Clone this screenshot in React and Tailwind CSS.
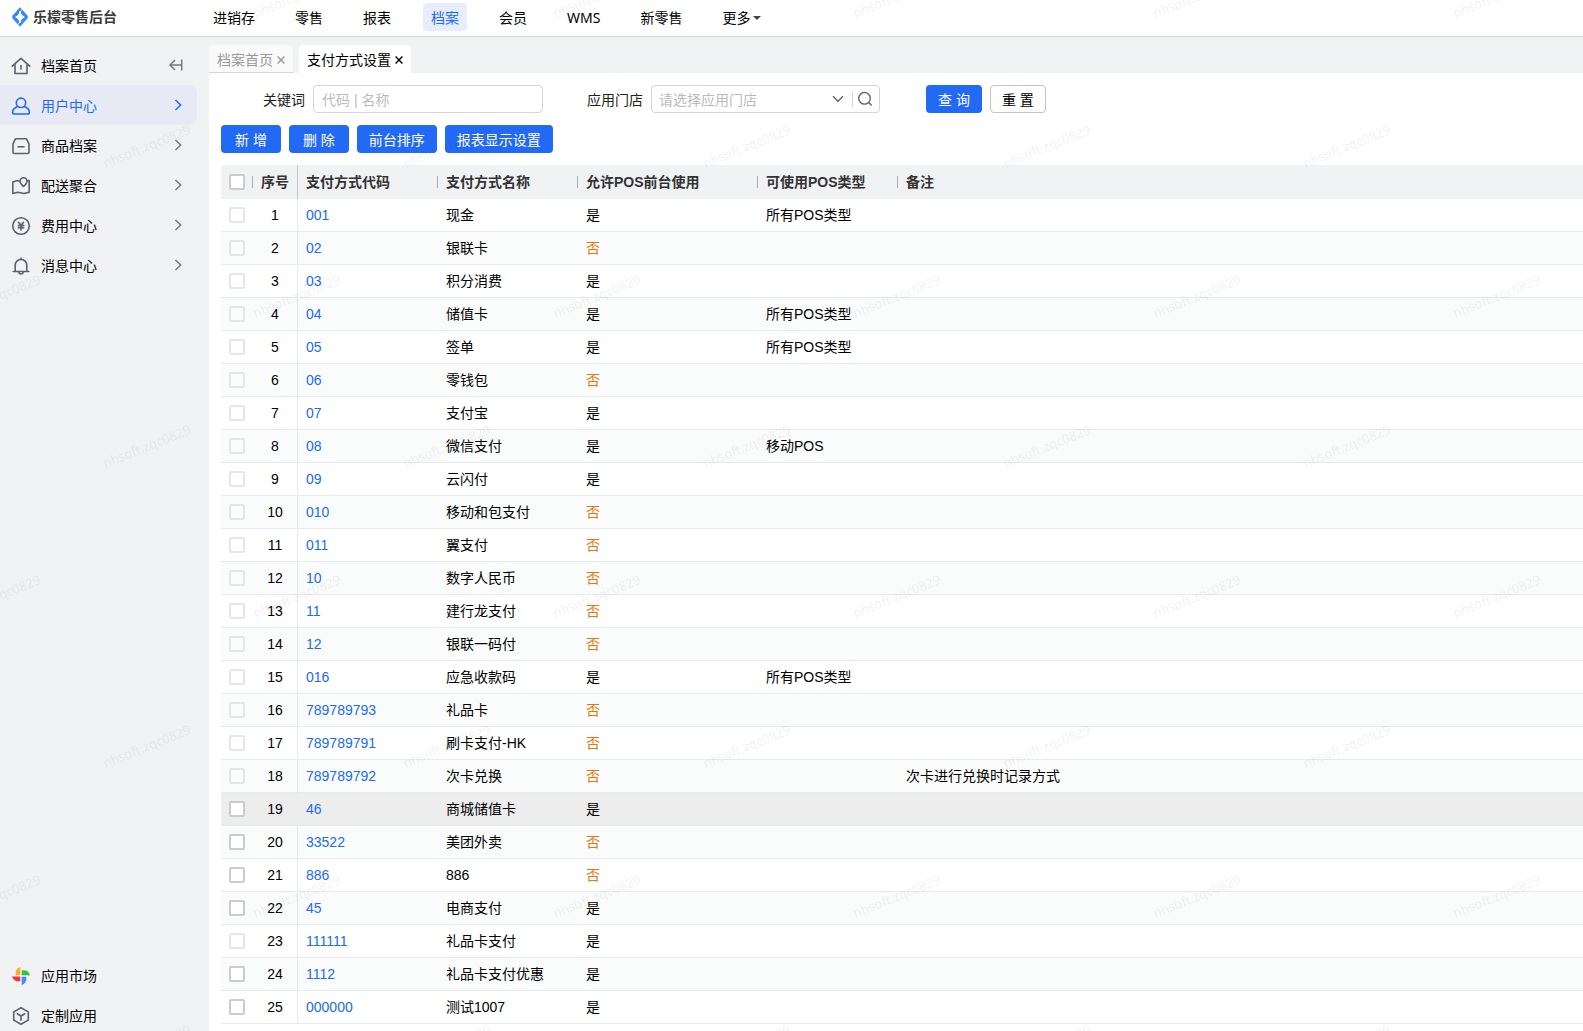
import { useState } from 'react';

const NAV = ['进销存', '零售', '报表', '档案', '会员', 'WMS', '新零售'];

const ROWS = [
  ['001', '现金', true, '所有POS类型'],
  ['02', '银联卡', false],
  ['03', '积分消费', true],
  ['04', '储值卡', true, '所有POS类型'],
  ['05', '签单', true, '所有POS类型'],
  ['06', '零钱包', false],
  ['07', '支付宝', true],
  ['08', '微信支付', true, '移动POS'],
  ['09', '云闪付', true],
  ['010', '移动和包支付', false],
  ['011', '翼支付', false],
  ['10', '数字人民币', false],
  ['11', '建行龙支付', false],
  ['12', '银联一码付', false],
  ['016', '应急收款码', true, '所有POS类型'],
  ['789789793', '礼品卡', false],
  ['789789791', '刷卡支付-HK', false],
  ['789789792', '次卡兑换', false, '', '次卡进行兑换时记录方式'],
  ['46', '商城储值卡', true],
  ['33522', '美团外卖', false],
  ['886', '886', false],
  ['45', '电商支付', true],
  ['111111', '礼品卡支付', true],
  ['1112', '礼品卡支付优惠', true],
  ['000000', '测试1007', true],
];

// only custom payment types can be selected
const EDITABLE = ['46', '33522', '886', '45', '1112', '000000'];

const Icon = ({ children }) => (
  <svg viewBox="0 0 20 20" className="w-5 h-5 shrink-0" fill="none" stroke="currentColor" strokeWidth="1.6" strokeLinejoin="round" strokeLinecap="round" aria-hidden="true">
    {children}
  </svg>
);

const HomeIcon = () => (
  <Icon>
    <path d="M1.200 10.200 10 2.400l8.800 7.800M4 8.500v9h12v-9M10 9.500v3.500" />
  </Icon>
);

const UserIcon = () => (
  <Icon>
    <circle cx="10" cy="6.800" r="4.700" />
    <path d="M6.200 10.800C3.200 12 1.600 14 1.600 16.200c0 1.200.7 1.800 1.900 1.800h13c1.200 0 1.900-.6 1.900-1.800 0-2.200-1.600-4.200-4.600-5.400" />
  </Icon>
);

const BoxIcon = () => (
  <Icon>
    <path d="M4.500 2.800h11l2.500 5v8.400c0 .8-.4 1.300-1.300 1.300H3.300c-.9 0-1.300-.5-1.300-1.300V7.800zM7 10.800h6" />
  </Icon>
);

const MapIcon = () => (
  <Icon>
    <path d="M7.800 5 6.500 4.500 1.800 6v11.500l5-1.200 6.200 1.200 5.200-1.200V4.500h-2M12.500 10.500c-2.300-2.200-3.500-3.800-3.500-5.300a3.500 3.500 0 0 1 7 0c0 1.500-1.200 3.100-3.500 5.300z" />
  </Icon>
);

const FeeIcon = () => (
  <Icon>
    <circle cx="10" cy="10" r="8.300" />
    <path d="M7.500 6.300 10 9.300 12.500 6.300M10 9.300V14M7.300 9.600h5.400M7.300 11.800h5.400" />
  </Icon>
);

const BellIcon = () => (
  <Icon>
    <path d="M10 2V3.300M4.200 15.500V9.200a5.800 5.800 0 0 1 11.600 0v6.300M2.200 15.500h15.600M7.800 16c.2 1.300 1 2 2.200 2s2-.7 2.200-2" />
  </Icon>
);

const CubeIcon = () => (
  <Icon>
    <path d="M10 1.800 17.300 5.900v8.200L10 18.200 2.700 14.100V5.900zM6.200 7.800 10 10l3.800-2.200M10 10v4.300" />
  </Icon>
);

const MarketIcon = () => (
  <svg viewBox="0 0 20 20" className="w-5 h-5 shrink-0" aria-hidden="true">
    <path d="M9.300 1v8H5C3.800 6 5.500 2 9.300 1z" fill="#fbb117" />
    <path d="M10.700 4.800c3-1.300 7.300.4 8.300 4.500h-8.300z" fill="#2bc840" />
    <path d="M1 10.500h8.300v4.500C6 16.300 2 14.400 1 10.500z" fill="#f5333f" />
    <path d="M10.700 10.700H15c1.200 3.300-.5 7.300-4.300 8.300z" fill="#3a8dff" />
  </svg>
);

const Chevron = () => (
  <svg viewBox="0 0 12 12" className="w-3 h-3 shrink-0" fill="none" stroke="currentColor" strokeWidth="1.500" aria-hidden="true">
    <path d="M3.500 1 8.700 6 3.500 11" />
  </svg>
);

const Close = () => (
  <svg viewBox="0 0 8 8" className="w-2 h-2" stroke="currentColor" strokeWidth="1.400" aria-hidden="true">
    <path d="M.6.6l6.800 6.800M7.400.6.6 7.400" />
  </svg>
);

const MENU = [
  { label: '用户中心', icon: UserIcon, active: true },
  { label: '商品档案', icon: BoxIcon },
  { label: '配送聚合', icon: MapIcon },
  { label: '费用中心', icon: FeeIcon },
  { label: '消息中心', icon: BellIcon },
];

const Watermark = () => (
  <svg className="absolute inset-0 w-full h-full pointer-events-none z-10" aria-hidden="true">
    <defs>
      <pattern id="wm" width="300" height="300" patternUnits="userSpaceOnUse">
        {[[147, 147], [-3, -3], [297, -3], [-3, 297], [297, 297]].map(([x, y]) => (
          <text key={`${x},${y}`} x={x} y={y + 4} transform={`rotate(-22 ${x} ${y})`} textAnchor="middle" fontSize="13" fill="#000" fillOpacity="0.05" fontFamily="'Noto Sans', sans-serif">
            nhsoft.zqc0829
          </text>
        ))}
      </pattern>
    </defs>
    <rect width="100%" height="100%" fill="url(#wm)" />
  </svg>
);

const Sidebar = () => (
  <aside className="w-[209px] shrink-0 flex flex-col justify-between pt-2">
    <nav aria-label="档案">
      <div className="flex items-center h-10 pl-[11px] pr-[26px]">
        <a href="#home" className="flex items-center gap-[10px] flex-1 pt-0.5">
          <span className="text-[#5c5f6e]"><HomeIcon /></span>
          档案首页
        </a>
        <button type="button" aria-label="收起菜单" className="text-[#777]">
          <svg viewBox="0 0 14 12" className="w-[14px] h-3" fill="none" stroke="currentColor" strokeWidth="1.500" aria-hidden="true">
            <path d="M6 1 1 6l5 5M1 6h11.500M12.700.5v11" />
          </svg>
        </button>
      </div>
      {MENU.map(({ label, icon: ItemIcon, active }) => (
        <a
          key={label}
          href="#menu"
          className={`flex items-center h-10 pl-[11px] pr-[13px] mr-3 rounded-r-lg ${active ? 'bg-[#e7eaf4] text-[#226af5]' : ''}`}
        >
          <span className="flex items-center gap-[10px] flex-1 pt-0.5">
            <span className={active ? '' : 'text-[#5c5f6e]'}><ItemIcon /></span>
            {label}
          </span>
          <span className={active ? '' : 'text-[#777]'}><Chevron /></span>
        </a>
      ))}
    </nav>
    <div className="flex flex-col gap-2">
      <a href="#market" className="flex items-center gap-[10px] h-8 pl-[11px] pt-0.5">
        <MarketIcon />
        应用市场
      </a>
      <a href="#custom" className="flex items-center gap-[10px] h-8 pl-[11px] pt-0.5">
        <span className="text-[#5c5f6e]"><CubeIcon /></span>
        定制应用
      </a>
    </div>
  </aside>
);

const HeadCell = ({ children, className }) => (
  <th className={`p-0 font-bold text-left ${className}`}>
    <div className="flex items-center justify-between pl-2">
      {children}
      <span className="w-px h-3 bg-[#a9adbd]"></span>
    </div>
  </th>
);

const PaymentTable = () => (
  <table className="w-full table-fixed border-separate border-spacing-0">
    <thead className="bg-[#f1f2f4] text-[#333]">
      <tr className="h-[34px]">
        <HeadCell className="w-8">
          <input type="checkbox" aria-label="全选" className="block appearance-none w-4 h-4 border-2 border-[#ccc] rounded-xs bg-white" />
        </HeadCell>
        <th className="w-[45px] p-0 font-bold border-r border-[#c3c6cc]">序号</th>
        <HeadCell className="w-[140px]">支付方式代码</HeadCell>
        <HeadCell className="w-[140px]">支付方式名称</HeadCell>
        <HeadCell className="w-[180px]">允许POS前台使用</HeadCell>
        <HeadCell className="w-[140px]">可使用POS类型</HeadCell>
        <th className="p-0 pl-2 font-bold text-left">备注</th>
      </tr>
    </thead>
    <tbody>
      {ROWS.map(([code, name, allowed, types, remark], i) => {
        const editable = EDITABLE.includes(code);
        return (
          <tr key={code} className={`h-[33px] *:border-b *:border-[#e8eaec] ${i === 18 ? 'bg-[#ededed]' : 'even:bg-[#fafcfb]'}`}>
            <td className="p-0 pl-2">
              <input
                type="checkbox"
                aria-label={name}
                disabled={!editable}
                className="block appearance-none w-4 h-4 border-2 border-[#ccc] rounded-xs bg-white disabled:border-[#e6e6e6] disabled:bg-transparent"
              />
            </td>
            <td className="p-0 text-center border-r">{i + 1}</td>
            <td className="p-0 pl-2"><a href="#detail" className="text-[#226af5]">{code}</a></td>
            <td className="p-0 pl-2">{name}</td>
            <td className={`p-0 pl-2 ${allowed ? '' : 'text-[#e8750c]'}`}>{allowed ? '是' : '否'}</td>
            <td className="p-0 pl-2">{types}</td>
            <td className="p-0 pl-2">{remark}</td>
          </tr>
        );
      })}
    </tbody>
  </table>
);

const App = () => {
  const [keyword, setKeyword] = useState('');

  return (
    <div className="relative min-h-screen flex flex-col bg-[#f1f2f4] text-black text-[14px] leading-5 overflow-hidden font-['Liberation_Sans','Noto_Sans_CJK_SC',sans-serif]">
      {/* Top bar */}
      <header className="flex items-center h-[37px] pb-0.5 bg-white border-b border-[#d5d6d8]">
        <a href="#top" className="flex items-center gap-[5px] w-[205px] pl-3 font-bold text-[#3b3b3b] shrink-0">
          <svg viewBox="0 0 16 20" className="w-4 h-5" aria-hidden="true">
            <path d="M8 .3l7.200 7.900c.9 1.200.9 2.400 0 3.600L8 19.700.8 11.800c-.9-1.200-.9-2.400 0-3.600z" fill="#348af9" />
            <path d="M8 4.300c.6 2.900 2 4.800 4.300 5.700C10 10.900 8.600 12.800 8 15.700 7.400 12.800 6 10.900 3.700 10 6 9.100 7.400 7.200 8 4.300z" fill="#fff" stroke="#fff" strokeWidth="1" />
            <path d="M8.300 5 10 2.200M7.700 15 6 17.800" stroke="#fff" strokeWidth=".8" />
          </svg>
          乐檬零售后台
        </a>
        <nav className="flex items-center gap-6 font-['Noto_Sans','Noto_Sans_CJK_SC',sans-serif]" aria-label="主导航">
          {NAV.map(item => (
            <a key={item} href="#nav" className={`flex items-center h-7 px-2 pt-0.5 rounded ${item === '档案' ? 'bg-[#e7edfc] text-[#226af5]' : ''}`}>
              {item}
            </a>
          ))}
          <button type="button" className="flex items-center gap-[3px] h-7 px-2 pt-0.5">
            更多
            <svg viewBox="0 0 8 4" className="w-2 h-1" fill="#444" aria-hidden="true"><path d="M0 0h8L4 4z" /></svg>
          </button>
        </nav>
      </header>

      <div className="flex flex-1">
        <Sidebar />

        <div className="flex-1 min-w-0 flex flex-col pt-2">
          {/* Tabs */}
          <div className="flex gap-[6px] h-7">
            <div className="flex items-center gap-1 px-2 pt-0.5 rounded-t bg-[#fafafa] border-b border-[#d5d6d8] text-[#999]">
              <a href="#home">档案首页</a>
              <button type="button" aria-label="关闭档案首页"><Close /></button>
            </div>
            <div className="flex items-center gap-1 px-2 pt-0.5 rounded-t bg-white">
              <a href="#payment">支付方式设置</a>
              <button type="button" aria-label="关闭支付方式设置"><Close /></button>
            </div>
          </div>

          <main className="flex-1 bg-white pl-3 pt-3">
            {/* Filters */}
            <form className="flex items-center h-7 pl-[42px]" onSubmit={e => e.preventDefault()}>
              <label htmlFor="keyword" className="mr-2 pt-0.5 text-[#222]">关键词</label>
              <input
                id="keyword"
                value={keyword}
                onChange={e => setKeyword(e.target.value)}
                placeholder="代码 | 名称"
                className="w-[230px] h-7 px-2 pt-0.5 border border-[#d5d5d5] rounded placeholder:text-[#bbb]"
              />
              <label htmlFor="store" className="ml-11 mr-2 pt-0.5 text-[#222]">应用门店</label>
              <div className="flex items-center w-[229px] h-7 pl-[7px] pr-1.5 border border-[#d5d5d5] rounded text-[#666]">
                <select id="store" defaultValue="" className="flex-1 appearance-none pt-0.5 text-[#bbb]">
                  <option value="">请选择应用门店</option>
                </select>
                <svg viewBox="0 0 12 8" className="w-3 h-2 mr-2" fill="none" stroke="currentColor" strokeWidth="1.500" aria-hidden="true">
                  <path d="M1 1.300 6 6.300l5-5" />
                </svg>
                <button type="button" aria-label="搜索门店" className="h-4 pl-1 border-l border-[#d5d5d5]">
                  <svg viewBox="0 0 16 16" className="w-4 h-4" fill="none" stroke="currentColor" strokeWidth="1.400" aria-hidden="true">
                    <circle cx="7.500" cy="7.300" r="5.800" />
                    <path d="m11.700 11.500 3 3" />
                  </svg>
                </button>
              </div>
              <button type="submit" className="h-7 px-3 pt-0.5 ml-[46px] rounded bg-[#226af5] text-white">查 询</button>
              <button type="reset" className="h-7 px-[11px] pt-0.5 ml-2 rounded border border-[#c4c4c4] bg-white" onClick={() => setKeyword('')}>重 置</button>
            </form>

            {/* Actions */}
            <div className="flex gap-2 my-3 text-white">
              <button type="button" className="h-7 px-[14px] pt-0.5 rounded bg-[#226af5]">新 增</button>
              <button type="button" className="h-7 px-[14px] pt-0.5 rounded bg-[#226af5]">删 除</button>
              <button type="button" className="h-7 px-3 pt-0.5 rounded bg-[#226af5]">前台排序</button>
              <button type="button" className="h-7 px-3 pt-0.5 rounded bg-[#226af5]">报表显示设置</button>
            </div>

            <PaymentTable />
          </main>
        </div>
      </div>

      <Watermark />
    </div>
  );
};

export default App;
